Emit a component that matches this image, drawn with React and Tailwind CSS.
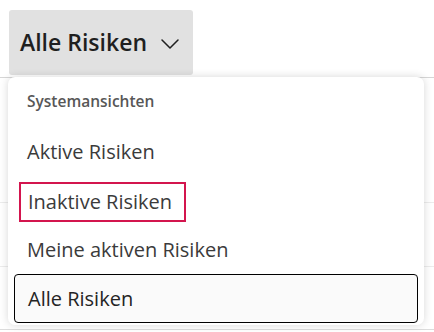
import { ChevronDown } from 'lucide-react'

const items = [
  { label: 'Aktive Risiken' },
  { label: 'Inaktive Risiken', marked: true },
  { label: 'Meine aktiven Risiken' },
  { label: 'Alle Risiken', selected: true },
]

export default function App() {
  return (
    <div
      className="relative w-[434px] h-[332px] overflow-hidden bg-white"
      style={{ fontFamily: '"Open Sans", "Noto Sans", sans-serif' }}
    >
      {/* page behind the menu */}
      <div className="pt-[10px] pl-[9px]">
        <button className="flex items-center gap-[7px] h-[65px] w-[184px] pl-[11px] rounded-[3px] bg-[#e1e1e1] text-[#1f1f1f]">
          <span className="text-[23px] font-semibold">Alle Risiken</span>
          <ChevronDown size={32} strokeWidth={1.15} className="mt-[2px]" />
        </button>
      </div>
      <div className="flex flex-col">
        <div className="h-[3px] border-b border-[#d6d6d6]" />
        <div className="h-[125px] border-b border-[#ececec]" />
        <div className="h-[64px] border-b border-[#ececec]" />
        <div className="h-[63px] border-b border-[#dcdcdc]" />
      </div>

      {/* dropdown menu */}
      <div className="absolute left-[8px] top-[77px] w-[416px] h-[248px] rounded-[7px] bg-white shadow-[0_0_8px_rgba(0,0,0,0.16)] px-[6px] pt-[13px]">
        <div className="pl-[13px] h-[23px] flex items-center text-[15.5px] font-semibold text-[#575757]">
          Systemansichten
        </div>
        <div className="flex flex-col mt-[14px]">
          {items.map(item => (
            <div key={item.label} className="h-[49px] flex items-center">
              {item.selected ? (
                <div className="w-full h-[49px] flex items-center pl-[13px] rounded-[4px] border border-black bg-[#fafafa] text-[20px] text-[#242424]">
                  {item.label}
                </div>
              ) : item.marked ? (
                <div className="ml-[5px] mt-[3px] w-[167px] h-[40px] flex items-center pl-[7px] border-2 border-[#d3154e] text-[20px] text-[#3b3b3b]">
                  {item.label}
                </div>
              ) : (
                <div className="pl-[13px] text-[20px] text-[#3b3b3b]">{item.label}</div>
              )}
            </div>
          ))}
        </div>
      </div>
    </div>
  )
}
